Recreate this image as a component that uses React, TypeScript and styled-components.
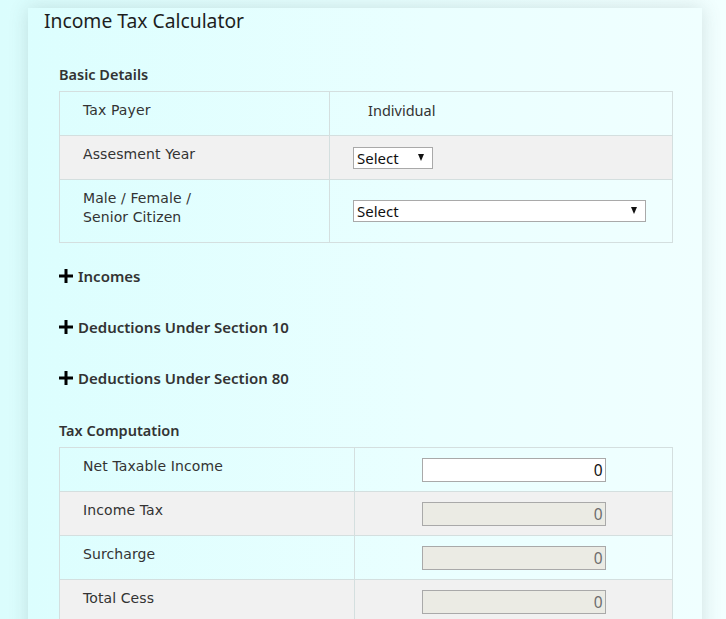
import React from "react";
import styled, { createGlobalStyle } from "styled-components";

const GlobalStyle = createGlobalStyle`
  html, body {
    margin: 0;
    padding: 0;
  }
  body {
    min-height: 619px;
    background: linear-gradient(to right, #dbfdfd 0%, #e6fefe 50%, #f2ffff 100%);
    font-family: "Noto Sans", "Open Sans", sans-serif;
    color: #333;
    overflow: hidden;
  }
`;

const Card = styled.div`
  margin: 8px 0 0 28px;
  width: 645px;
  padding: 0 29px 40px 0;
  box-shadow: 0 0 18px rgba(60, 90, 90, 0.18);
  background: linear-gradient(to right, #dcfefe 0%, #eaffff 60%, #f0ffff 100%);
`;

const Title = styled.h1`
  margin: 0;
  padding-left: 16px;
  font-family: "Noto Sans", "Open Sans", sans-serif;
  font-size: 19.3px;
  line-height: 26px;
  font-weight: 400;
  color: #1e1e1e;
`;

const Body = styled.div`
  padding: 30px 0 0 31px;
  display: flex;
  flex-direction: column;
`;

const SectionHeading = styled.h2<{ $mt?: number }>`
  margin: ${(p) => p.$mt ?? 0}px 0 7px 0;
  font-family: "Noto Sans", "Open Sans", sans-serif;
  font-size: 14.5px;
  line-height: 20px;
  font-weight: 600;
  color: #333;
`;

const Table = styled.table`
  width: 614px;
  border-collapse: collapse;
  table-layout: fixed;
`;

const Row = styled.tr<{ $alt?: boolean }>`
  background: ${(p) => (p.$alt ? "#f1f1f1" : "transparent")};
`;

const LabelCell = styled.td<{ $w: number }>`
  box-sizing: border-box;
  width: ${(p) => p.$w}px;
  border: 1px solid #d4dfdf;
  padding: 9px 10px 15px 23px;
  vertical-align: top;
  font-family: "DejaVu Sans", Verdana, sans-serif;
  font-size: 14px;
  line-height: 19px;
  letter-spacing: 0.1px;
  color: #333;
`;

const ValueCell = styled.td<{ $align?: "left" | "center"; $indent?: number; $top?: boolean }>`
  box-sizing: border-box;
  border: 1px solid #d4dfdf;
  padding: ${(p) => (p.$top ? `9px 10px 15px ${p.$indent ?? 23}px` : `0 0 0 ${p.$indent ?? 23}px`)};
  vertical-align: ${(p) => (p.$top ? "top" : "middle")};
  text-align: ${(p) => p.$align ?? "left"};
  font-family: "Noto Sans", "Open Sans", sans-serif;
  font-size: 14.5px;
  line-height: 19px;
  color: #333;
`;

const SelectWrap = styled.span<{ $w: number }>`
  position: relative;
  display: inline-block;
  width: ${(p) => p.$w}px;
  height: 22px;
  vertical-align: middle;
`;

const Select = styled.select`
  appearance: none;
  -webkit-appearance: none;
  box-sizing: border-box;
  width: 100%;
  height: 22px;
  margin: 0;
  padding: 0 16px 1px 3px;
  border: 1px solid #a9a9a9;
  border-radius: 0;
  background: #fff;
  font-family: "Noto Sans", "Open Sans", sans-serif;
  font-size: 15px;
  color: #111;
  outline: none;
`;

const Arrow = styled.span`
  position: absolute;
  right: 9px;
  top: 7px;
  width: 0;
  height: 0;
  border-left: 3.5px solid transparent;
  border-right: 3.5px solid transparent;
  border-top: 7px solid #111;
  pointer-events: none;
`;

const Toggle = styled.div`
  display: flex;
  align-items: center;
  gap: 5px;
  height: 20px;
  margin-bottom: 31px;
  font-family: "Noto Sans", "Open Sans", sans-serif;
  font-size: 15px;
  font-weight: 600;
  color: #333;
`;

const TableGap = styled.div`
  height: 23px;
`;

const NumInput = styled.input`
  box-sizing: border-box;
  width: 184px;
  height: 24px;
  margin: 0;
  padding: 0 2px 0 3px;
  border: 1px solid #a9a9a9;
  border-radius: 0;
  text-align: right;
  font-family: "Noto Sans", "Open Sans", sans-serif;
  font-size: 15.5px;
  color: #111;
  background: #fff;
  vertical-align: middle;
  outline: none;
  &:disabled {
    background: #ebebe4;
    color: #6d6d6d;
  }
`;

const PlusIcon = () => (
  <svg width="14" height="14" viewBox="0 0 14 14" aria-hidden="true">
    <rect x="5.5" y="0" width="3" height="14" fill="#000" />
    <rect x="0" y="5.5" width="14" height="3" fill="#000" />
  </svg>
);

const DropSelect = ({ w }: { w: number }) => (
  <SelectWrap $w={w}>
    <Select defaultValue="">
      <option value="">Select</option>
    </Select>
    <Arrow />
  </SelectWrap>
);

const computation = [
  { label: "Net Taxable Income", editable: true },
  { label: "Income Tax" },
  { label: "Surcharge" },
  { label: "Total Cess" },
];

export default function App() {
  return (
    <>
      <GlobalStyle />
      <Card>
        <Title>Income Tax Calculator</Title>
        <Body>
          <SectionHeading>Basic Details</SectionHeading>
          <Table>
            <tbody>
              <Row>
                <LabelCell $w={270}>Tax Payer</LabelCell>
                <ValueCell $top $indent={38}>Individual</ValueCell>
              </Row>
              <Row $alt>
                <LabelCell $w={270}>Assesment Year</LabelCell>
                <ValueCell>
                  <DropSelect w={80} />
                </ValueCell>
              </Row>
              <Row>
                <LabelCell $w={270}>
                  Male / Female /
                  <br />
                  Senior Citizen
                </LabelCell>
                <ValueCell>
                  <DropSelect w={293} />
                </ValueCell>
              </Row>
            </tbody>
          </Table>
          <TableGap />
          <Toggle>
            <PlusIcon />
            Incomes
          </Toggle>
          <Toggle>
            <PlusIcon />
            Deductions Under Section 10
          </Toggle>
          <Toggle>
            <PlusIcon />
            Deductions Under Section 80
          </Toggle>
          <SectionHeading $mt={1}>Tax Computation</SectionHeading>
          <Table>
            <tbody>
              {computation.map((r, i) => (
                <Row key={r.label} $alt={i % 2 === 1}>
                  <LabelCell $w={295}>{r.label}</LabelCell>
                  <ValueCell $align="center" $indent={0}>
                    <NumInput defaultValue="0" disabled={!r.editable} />
                  </ValueCell>
                </Row>
              ))}
            </tbody>
          </Table>
        </Body>
      </Card>
    </>
  );
}
